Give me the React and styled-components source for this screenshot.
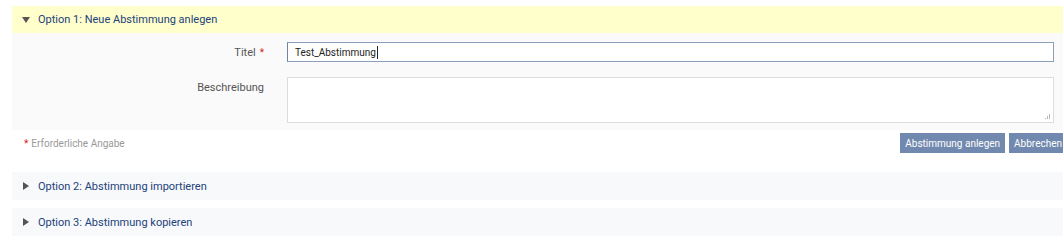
import React from "react";
import styled, { createGlobalStyle } from "styled-components";

const Global = createGlobalStyle`
  html, body { margin: 0; padding: 0; background: #ffffff; overflow: hidden; }
  body { font-family: Roboto, "Liberation Sans", Arial, sans-serif; }
  * { box-sizing: border-box; }
`;

const Page = styled.div`
  padding: 6px 0 0 12px;
  display: flex;
  flex-direction: column;
`;

const Section = styled.section`
  display: flex;
  flex-direction: column;
  margin-bottom: ${(p) => p.$gap ?? 8}px;
`;

const Header = styled.div`
  height: ${(p) => (p.$open ? 27 : 28)}px;
  display: flex;
  align-items: center;
  gap: 8px;
  padding-left: 10px;
  background: ${(p) => (p.$open ? "#ffffcc" : "#f8f9fb")};
  color: #21427a;
  font-size: 11px;
`;

const Caret = styled.span`
  width: 0;
  height: 0;
  border-style: solid;
  ${(p) =>
    p.$open
      ? `border-width: 6px 4px 0 4px; border-color: #555 transparent transparent transparent;`
      : `border-width: 4px 0 4px 6px; border-color: transparent transparent transparent #555; margin-left: 1px; margin-right: 1px;`}
`;

const Panel = styled.div`
  background: #fafafa;
  padding: 9px 9px 7px 0;
  display: grid;
  grid-template-columns: 252px 1fr;
  column-gap: 23px;
  row-gap: 15px;
`;

const Label = styled.label`
  text-align: right;
  font-size: 11px;
  color: #555;
  padding-top: ${(p) => p.$pt || 4}px;
`;

const Req = styled.span`
  color: #d22;
  margin-left: 4px;
  font-size: 10px;
`;

const Input = styled.div`
  height: 20px;
  border: 1px solid #8d9fbd;
  border-left-color: #6e84a8;
  background: #fff;
  font-size: 10px;
  color: #222;
  padding: 0 7px;
  display: flex;
  align-items: center;
`;

const Cursor = styled.span`
  display: inline-block;
  width: 1px;
  height: 13px;
  background: #222;
  margin-left: 1px;
`;

const TextArea = styled.div`
  height: 46px;
  border: 1px solid #dcdcdc;
  background: #fff;
  position: relative;
`;

const Grip = styled.svg`
  position: absolute;
  right: 2px;
  bottom: 2px;
`;

const Footer = styled.div`
  display: flex;
  align-items: center;
  justify-content: space-between;
  padding-left: 12px;
  height: 26px;
`;

const Note = styled.span`
  font-size: 10px;
  color: #999;
`;

const NoteReq = styled.span`
  color: #d22;
  margin-right: 3px;
`;

const Buttons = styled.div`
  display: flex;
  gap: 4px;
  margin-right: -4px;
`;

const Button = styled.button`
  height: 20px;
  border: none;
  background: #7189ae;
  color: #fff;
  font-family: Roboto, "Liberation Sans", Arial, sans-serif;
  font-size: 10px;
  padding: 0 5px;
  cursor: pointer;
`;

export default function App() {
  return (
    <>
      <Global />
      <Page>
        <Section $gap={16}>
          <Header $open>
            <Caret $open />
            Option 1: Neue Abstimmung anlegen
          </Header>
          <Panel>
            <Label>
              Titel<Req>*</Req>
            </Label>
            <Input>
              Test_Abstimmung
              <Cursor />
            </Input>
            <Label $pt={4}>Beschreibung</Label>
            <TextArea>
              <Grip width="7" height="7" viewBox="0 0 7 7">
                <rect x="5" y="1" width="1" height="5" fill="#b8b8b8" />
                <rect x="3" y="3" width="1" height="3" fill="#b8b8b8" />
                <rect x="1" y="5" width="1" height="1" fill="#b8b8b8" />
              </Grip>
            </TextArea>
          </Panel>
          <Footer>
            <Note>
              <NoteReq>*</NoteReq>Erforderliche Angabe
            </Note>
            <Buttons>
              <Button>Abstimmung anlegen</Button>
              <Button>Abbrechen</Button>
            </Buttons>
          </Footer>
        </Section>
        <Section>
          <Header>
            <Caret />
            Option 2: Abstimmung importieren
          </Header>
        </Section>
        <Section>
          <Header>
            <Caret />
            Option 3: Abstimmung kopieren
          </Header>
        </Section>
      </Page>
    </>
  );
}
